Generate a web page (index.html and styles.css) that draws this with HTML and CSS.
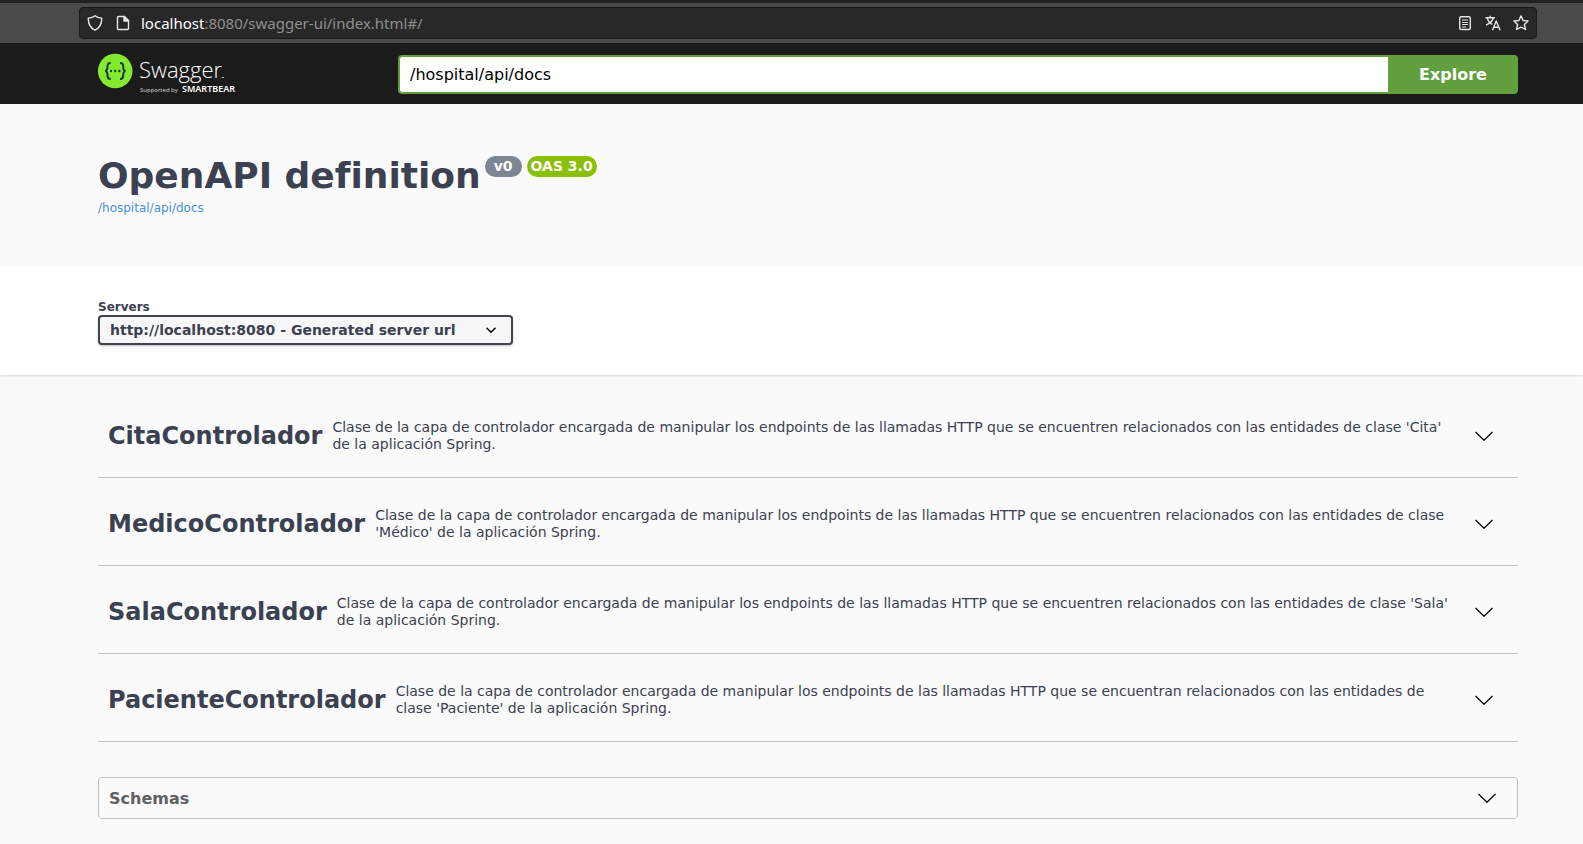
FILE: index.html
```html
<!DOCTYPE html>
<html lang="es">
<head>
<meta charset="utf-8">
<title>Swagger UI</title>
<link rel="stylesheet" href="styles.css">
</head>
<body>
<div class="browser">
  <div class="urlbar">
    <svg class="icon" viewBox="0 0 16 16" aria-hidden="true"><path d="M8 .8C6.500 2.200 3.800 2.900 1.300 3.100c-.2 5.200 1.700 9.700 6.700 12.100 5-2.400 6.900-6.900 6.700-12.100C12.200 2.900 9.500 2.200 8 .8z"/></svg>
    <svg class="icon" viewBox="0 0 16 16" aria-hidden="true"><path d="M3.500 1.500h6l4 4v8a1 1 0 0 1-1 1h-9a1 1 0 0 1-1-1v-11a1 1 0 0 1 1-1z"/><path class="solid" d="M9 1.500v4.500h4.500z"/></svg>
    <p class="url"><span class="host">localhost</span>:8080/swagger-ui/index.html#/</p>
    <button class="tool" type="button" aria-label="Vista de lectura"><svg class="icon" viewBox="0 0 16 16"><rect x="2.700" y="1.700" width="10.600" height="12.800" rx="1.500"/><path d="M5 5h6M5 7.500h6M5 9.500h6M5 12h4" stroke-width="1.100"/></svg></button>
    <button class="tool" type="button" aria-label="Traducir"><svg class="icon" viewBox="0 0 16 16"><path d="M.5 2.700h9.500M5.200.7v2M2.300 3c.6 2.600 2.900 5.300 5 6.300M8.200 3C7.600 5.900 4.200 9 1 10M7.500 15.300l3.700-9.300 3.900 9.300M8.900 12.300h4.900"/></svg></button>
    <button class="tool" type="button" aria-label="Marcador"><svg class="icon" viewBox="0 0 16 16"><path d="M8 .9l2.100 4.600 5 .5-3.700 3.500 1.100 5L8 12.100l-4.500 2.400 1.100-5L.9 6l5-.5z"/></svg></button>
  </div>
</div>
<header class="topbar">
  <a class="logo" href="#/" aria-label="Swagger">
    <svg class="logo-art" viewBox="0 0 144 43" aria-hidden="true">
      <circle cx="17.200" cy="18" r="17.300" fill="#85ea2d"/>
      <path d="M12.700 10c-2.800 0-3.200 1-3.200 3.300 0 2.800-.2 4.400-2.300 4.600 2.100.3 2.300 1.900 2.300 4.600 0 2.300.4 3.500 3.200 3.500M22 10c2.800 0 3.200 1 3.200 3.300 0 2.800.2 4.400 2.300 4.600-2.100.3-2.300 1.900-2.300 4.600 0 2.300-.4 3.500-3.200 3.500" fill="none" stroke="#173647" stroke-width="2"/>
      <g fill="#173647"><circle cx="13" cy="18" r="1.200"/><circle cx="17.200" cy="18" r="1.200"/><circle cx="21.400" cy="18" r="1.200"/></g>
      <text class="logo-name" x="41" y="25">Swagger</text>
      <path d="M123.500 24.500h2.500" stroke="#aaa" stroke-width="1"/>
      <text class="logo-by" x="42" y="39">Supported by</text>
      <text class="logo-brand" x="84" y="39">SMARTBEAR</text>
    </svg>
  </a>
  <form class="explore">
    <input class="explore-url" type="text" value="/hospital/api/docs" aria-label="URL de la definición">
    <button class="explore-button" type="button">Explore</button>
  </form>
</header>
<main>
  <section class="info">
    <h1 class="title">OpenAPI definition <span class="badges"><span class="badge">v0</span><span class="badge badge-oas">OAS 3.0</span></span></h1>
    <a class="spec" href="#/">/hospital/api/docs</a>
  </section>
  <section class="servers">
    <label class="servers-label" for="servers">Servers</label>
    <div class="select-wrap">
      <select class="select" id="servers"><option>http://localhost:8080 - Generated server url</option></select>
      <svg class="select-arrow" viewBox="0 0 20 20" aria-hidden="true"><path d="M5.500 7.800l4.500 4.500 4.500-4.500"/></svg>
    </div>
  </section>
  <section class="tags">
    <div class="tag">
      <h2 class="tag-name">CitaControlador</h2>
      <p class="tag-text">Clase de la capa de controlador encargada de manipular los endpoints de las llamadas HTTP que se encuentren relacionados con las entidades de clase 'Cita' de la aplicación Spring.</p>
      <button class="toggle" type="button" aria-label="Expandir CitaControlador"><svg class="chevron" viewBox="0 0 20 20"><path d="M1.500 6l8.500 8.300L18.500 6"/></svg></button>
    </div>
    <div class="tag">
      <h2 class="tag-name">MedicoControlador</h2>
      <p class="tag-text">Clase de la capa de controlador encargada de manipular los endpoints de las llamadas HTTP que se encuentren relacionados con las entidades de clase 'Médico' de la aplicación Spring.</p>
      <button class="toggle" type="button" aria-label="Expandir MedicoControlador"><svg class="chevron" viewBox="0 0 20 20"><path d="M1.500 6l8.500 8.300L18.500 6"/></svg></button>
    </div>
    <div class="tag">
      <h2 class="tag-name">SalaControlador</h2>
      <p class="tag-text">Clase de la capa de controlador encargada de manipular los endpoints de las llamadas HTTP que se encuentren relacionados con las entidades de clase 'Sala' de la aplicación Spring.</p>
      <button class="toggle" type="button" aria-label="Expandir SalaControlador"><svg class="chevron" viewBox="0 0 20 20"><path d="M1.500 6l8.500 8.300L18.500 6"/></svg></button>
    </div>
    <div class="tag">
      <h2 class="tag-name">PacienteControlador</h2>
      <p class="tag-text">Clase de la capa de controlador encargada de manipular los endpoints de las llamadas HTTP que se encuentran relacionados con las entidades de clase 'Paciente' de la aplicación Spring.</p>
      <button class="toggle" type="button" aria-label="Expandir PacienteControlador"><svg class="chevron" viewBox="0 0 20 20"><path d="M1.500 6l8.500 8.300L18.500 6"/></svg></button>
    </div>
    <button class="schemas" type="button"><span>Schemas</span><svg class="chevron" viewBox="0 0 20 20" aria-hidden="true"><path d="M1.500 6l8.500 8.300L18.500 6"/></svg></button>
  </section>
</main>
</body>
</html>
```
FILE: styles.css
```css
* { box-sizing: border-box; }

body {
  margin: 0;
  background: #fafafa;
  color: #3b4151;
  font-family: "DejaVu Sans", sans-serif;
}

h1, h2, p { margin: 0; }
button, input, select { font-family: inherit; }
button { cursor: pointer; }

/* Browser bar */
.browser {
  padding: 4px 46px 4px 79px;
  border-top: 3px solid #222;
  background: #4a4a4a;
}

.urlbar {
  display: flex;
  align-items: center;
  gap: 12px;
  height: 32px;
  padding: 0 7px;
  border: 1px solid #1a1a1a;
  border-radius: 4px;
  background: #282828;
}

.icon {
  display: block;
  width: 16px;
  height: 16px;
  fill: none;
  stroke: #e6e6e6;
  stroke-width: 1.4;
  stroke-linejoin: round;
}

.icon .solid { fill: #e6e6e6; }

.url {
  flex: 1;
  margin-left: -2px;
  color: #8f8f8f;
  font: 15px/20px "Noto Sans", sans-serif;
}

.host { color: #fff; }

.tool {
  padding: 0;
  border: 0;
  background: none;
}

/* Swagger bar */
.topbar {
  display: flex;
  align-items: center;
  gap: 156px;
  padding: 10px 65px 8px 98px;
  background: #1b1b1b;
}

.logo-art {
  display: block;
  width: 144px;
  height: 43px;
  overflow: visible;
}

.logo-name { fill: #fff; font: 300 22px "Open Sans", sans-serif; }
.logo-by { fill: #ddd; font: 6px "Open Sans", sans-serif; }
.logo-brand { fill: #fff; font: 600 9px "Noto Sans", sans-serif; }

.explore { display: flex; flex: 1; }

.explore-url {
  flex: 1;
  min-width: 0;
  height: 39px;
  padding: 0 10px;
  border: 2px solid #62a03f;
  border-right: 0;
  border-radius: 4px 0 0 4px;
  background: #fff;
  color: #000;
  font-size: 16px;
}

.explore-button {
  width: 130px;
  border: 0;
  border-radius: 0 4px 4px 0;
  background: #62a03f;
  color: #fff;
  font-size: 16px;
  font-weight: 700;
}

/* Definition heading */
.info { padding: 50px 65px 48px 98px; }

.title {
  display: flex;
  align-items: flex-start;
  gap: 4px;
  font-size: 36px;
  line-height: 44px;
}

.badges { display: flex; gap: 5px; padding-top: 2px; }

.badge {
  padding: 0 9px;
  border-radius: 11px;
  background: #7d8492;
  color: #fff;
  font-size: 14px;
  line-height: 21px;
}

.badge-oas { padding: 0 4px; background: #89bf04; }

.spec {
  display: block;
  color: #4990e2;
  font-size: 12px;
  line-height: 20px;
  text-decoration: none;
}

/* Servers */
.servers {
  padding: 33px 65px 30px 98px;
  background: #fff;
  box-shadow: 0 1px 2px rgba(0, 0, 0, .15);
}

.servers-label {
  display: block;
  font-size: 12px;
  font-weight: 700;
  line-height: 16px;
}

.select-wrap { position: relative; width: fit-content; }

.select {
  display: block;
  width: 415px;
  max-width: 100%;
  height: 30px;
  padding: 0 40px 0 10px;
  border: 2px solid #41444e;
  border-radius: 4px;
  background: #f7f7f7;
  box-shadow: 0 1px 2px rgba(0, 0, 0, .25);
  color: #3b4151;
  font-size: 14px;
  font-weight: 700;
  appearance: none;
}

.select-arrow {
  position: absolute;
  top: 5px;
  right: 12px;
  width: 20px;
  height: 20px;
  fill: none;
  stroke: #000;
  stroke-width: 1.5;
  pointer-events: none;
}

/* Tag list */
.tags { padding: 15px 65px 25px 98px; }

.tag {
  display: flex;
  align-items: center;
  gap: 10px;
  min-height: 88px;
  padding: 5px 24px 0 10px;
  border-bottom: 1px solid #c1c2c5;
}

.tag-name { font-size: 24px; line-height: 32px; }
.tag-text { flex: 1; font-size: 14px; line-height: 17px; }

.toggle {
  padding: 0 0 0 10px;
  border: 0;
  background: none;
}

.chevron {
  display: block;
  width: 20px;
  height: 20px;
  fill: none;
  stroke: #111;
  stroke-width: 1.4;
}

.schemas {
  display: flex;
  align-items: center;
  justify-content: space-between;
  width: 100%;
  height: 42px;
  margin-top: 35px;
  padding: 0 20px 0 10px;
  border: 1px solid #c0c1c3;
  border-radius: 4px;
  background: none;
  color: #606060;
  font-size: 16px;
  font-weight: 700;
}
```
